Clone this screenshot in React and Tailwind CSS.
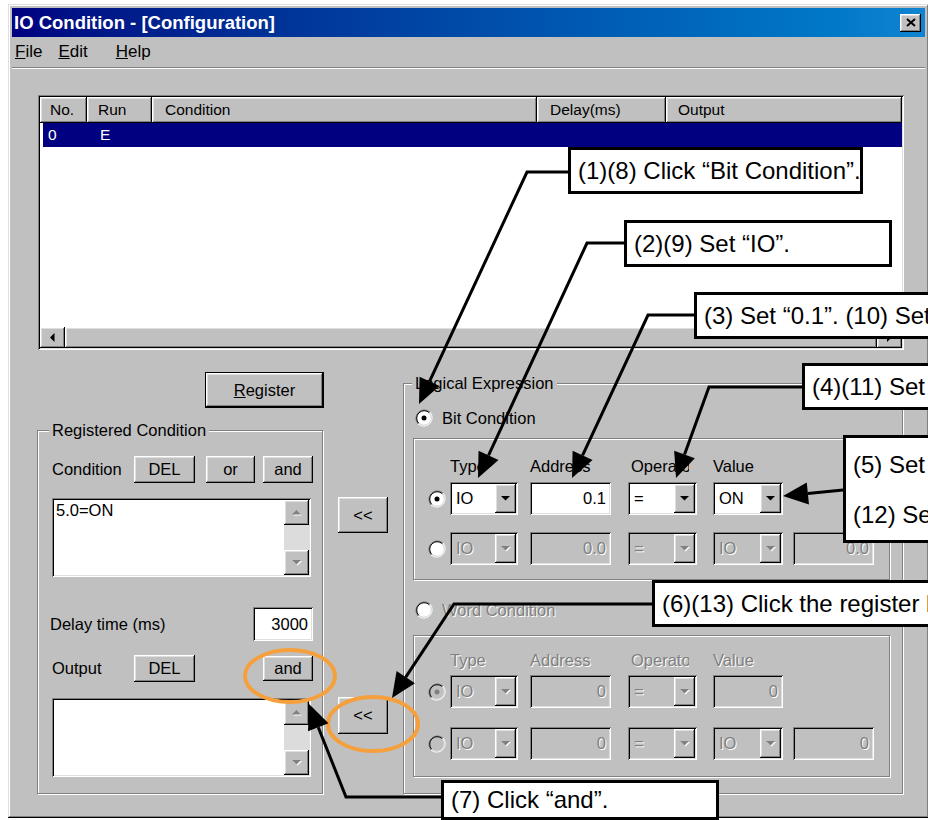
import React from "react";

const raised =
  "bg-[#c0c0c0] shadow-[inset_-1px_-1px_#000,inset_1px_1px_#fff,inset_-2px_-2px_#808080,inset_2px_2px_#dfdfdf]";
const sunken =
  "shadow-[inset_1px_1px_#808080,inset_-1px_-1px_#fff,inset_2px_2px_#000,inset_-2px_-2px_#dfdfdf]";
const etched = "border border-[#808080] shadow-[1px_1px_0_#fff,inset_1px_1px_0_#fff]";
const dim = "text-[#808080] [text-shadow:1px_1px_0_#fff]";

function Tri({ dir = "down", off }) {
  const pts = {
    down: "0,0 9,0 4.5,4.5",
    up: "0,4.5 9,4.5 4.5,0",
    left: "4.5,0 4.5,9 0,4.5",
    right: "0,0 0,9 4.5,4.5",
  }[dir];
  const flat = dir === "down" || dir === "up";
  return (
    <svg width={flat ? 10 : 6} height={flat ? 6 : 10} className="shrink-0">
      {off && <polygon points={pts} fill="#fff" transform="translate(1 1)" />}
      <polygon points={pts} fill={off ? "#808080" : "#000"} />
    </svg>
  );
}

function Radio({ checked, off }) {
  return (
    <svg width="18" height="18" viewBox="0 0 18 18" className="shrink-0">
      <circle cx="9" cy="9" r="7" fill={off ? "#c0c0c0" : "#fff"} />
      <path d="M3 15A8.5 8.5 0 0 1 15 3" fill="none" stroke="#808080" />
      <path d="M15 3A8.5 8.5 0 0 1 3 15" fill="none" stroke="#fff" />
      <path d="M3.7 14.3A7.5 7.5 0 0 1 14.3 3.7" fill="none" stroke="#000" />
      <path d="M14.3 3.7A7.5 7.5 0 0 1 3.7 14.3" fill="none" stroke="#dfdfdf" />
      {checked && <circle cx="9" cy="9" r="2.5" fill={off ? "#808080" : "#000"} />}
    </svg>
  );
}

function Combo({ v, off, className = "" }) {
  return (
    <div className={`flex p-[2px] ${sunken} ${off ? "bg-[#c0c0c0]" : "bg-white"} ${className}`}>
      <div className={`flex-1 flex items-center pl-[4px] ${off ? dim : ""}`}>{v}</div>
      <div className={`w-[21px] flex items-center justify-center ${raised}`}>
        <Tri off={off} />
      </div>
    </div>
  );
}

function Field({ v, off, className = "" }) {
  return (
    <div
      className={`flex items-center justify-end pr-[5px] ${sunken} ${
        off ? "bg-[#c0c0c0] text-[#808080] [text-shadow:1px_1px_0_#fff]" : "bg-white"
      } ${className}`}
    >
      {v}
    </div>
  );
}

function Btn({ className = "", children }) {
  return <div className={`flex items-center justify-center ${raised} ${className}`}>{children}</div>;
}

function ListBox({ text }) {
  return (
    <div className={`flex w-[259px] h-[79px] bg-white p-[2px] ${sunken}`}>
      <div className="flex-1 pl-[2px] leading-[20px]">{text}</div>
      <div className="w-[25px] flex flex-col">
        <Btn className="h-[25px]">
          <Tri dir="up" off />
        </Btn>
        <div className="flex-1 bg-[#dcdcdc]" />
        <Btn className="h-[25px]">
          <Tri dir="down" off />
        </Btn>
      </div>
    </div>
  );
}

function Labels({ off, className = "" }) {
  return (
    <div className={`flex h-[20px] items-center ${off ? dim : ""} ${className}`}>
      <div className="w-[22px]" />
      <div className="w-[68px]">Type</div>
      <div className="ml-[12px] w-[81px]">Address</div>
      <div className="ml-[17px] w-[69px]">
        <div className="ml-[3px] w-[58px] overflow-hidden whitespace-nowrap">Operator</div>
      </div>
      <div className="ml-[16px] w-[70px]">Value</div>
    </div>
  );
}

const leads = [
  { pts: [[568, 172], [527, 172]], tip: [419, 404] },
  { pts: [[624, 243], [587, 243]], tip: [478, 478] },
  { pts: [[694, 315], [648, 315]], tip: [572, 478] },
  { pts: [[802, 387], [709, 387]], tip: [676, 478] },
  { pts: [[843, 490]], tip: [783, 496] },
  { pts: [[652, 604], [454, 604]], tip: [392, 698] },
  { pts: [[441, 797], [346, 797]], tip: [309, 704] },
];

function Leader({ pts, tip }) {
  const [fx, fy] = pts[pts.length - 1];
  const dx = tip[0] - fx;
  const dy = tip[1] - fy;
  const len = Math.hypot(dx, dy);
  const ux = dx / len;
  const uy = dy / len;
  const bx = tip[0] - ux * 25;
  const by = tip[1] - uy * 25;
  const nx = -uy * 11;
  const ny = ux * 11;
  const d = "M" + pts.map((p) => p.join(" ")).join(" L") + ` L${bx} ${by}`;
  return (
    <g>
      <path d={d} fill="none" stroke="#000" strokeWidth="3" />
      <polygon points={`${tip[0]},${tip[1]} ${bx + nx},${by + ny} ${bx - nx},${by - ny}`} fill="#000" />
    </g>
  );
}

function Callout({ className = "", children }) {
  return (
    <div
      className={`absolute bg-white border-[3px] border-black pl-[7px] text-[24px] whitespace-nowrap font-['Liberation_Sans',Arial,sans-serif] ${className}`}
    >
      {children}
    </div>
  );
}

export default function App() {
  return (
    <div className="relative w-[928px] h-[820px] overflow-hidden bg-white pl-[8px] pt-[4px] font-['Liberation_Sans',Arial,sans-serif] text-[16.5px] text-black">
      <div className="w-[921px] h-[814px] bg-[#c0c0c0] p-[4px] flex flex-col shadow-[inset_-1px_-1px_#000,inset_1px_1px_#dfdfdf,inset_-2px_-2px_#808080,inset_2px_2px_#fff]">
        {/* title bar */}
        <div className="h-[29px] flex items-center bg-linear-to-r from-[#000080] to-[#1084d0] pl-[2px] pr-[4px]">
          <span className="text-white font-bold text-[18.5px]">IO Condition - [Configuration]</span>
          <Btn className="ml-auto w-[21px] h-[18px]">
            <svg width="10" height="9">
              <path d="M1 1L9 8M9 1L1 8" stroke="#000" strokeWidth="2" />
            </svg>
          </Btn>
        </div>

        {/* menu */}
        <div className="h-[29px] flex items-center text-[17px]">
          <span className="ml-[3px]">
            <u>F</u>ile
          </span>
          <span className="ml-[16px]">
            <u>E</u>dit
          </span>
          <span className="ml-[28px]">
            <u>H</u>elp
          </span>
        </div>
        <div className="mt-[1px] h-[1px] bg-[#808080]" />
        <div className="h-[1px] bg-white" />

        {/* client */}
        <div className="pl-[25px] pt-[26px]">
          {/* list view */}
          <div className={`ml-[1px] w-[866px] h-[255px] bg-white p-[2px] flex flex-col ${sunken}`}>
            <div className="flex h-[26px] text-[15.5px]">
              <div className={`w-[47px] flex items-center pl-[10px] ${raised}`}>No.</div>
              <div className={`w-[65px] flex items-center pl-[11px] ${raised}`}>Run</div>
              <div className={`w-[385px] flex items-center pl-[13px] ${raised}`}>Condition</div>
              <div className={`w-[129px] flex items-center pl-[13px] ${raised}`}>Delay(ms)</div>
              <div className={`flex-1 flex items-center pl-[12px] ${raised}`}>Output</div>
            </div>
            <div className="h-[24px] ml-[3px] bg-[#000080] text-white flex items-center text-[15.5px]">
              <div className="w-[44px] pl-[5px]">0</div>
              <div className="pl-[13px]">E</div>
            </div>
            <div className="flex-1" />
            <div className="h-[21px] flex">
              <Btn className="w-[25px]">
                <Tri dir="left" />
              </Btn>
              <div className={`flex-1 ${raised}`} />
              <Btn className="w-[25px]">
                <Tri dir="right" />
              </Btn>
            </div>
          </div>

          <div className="flex">
            {/* left column */}
            <div className="w-[287px] flex flex-col">
              <div className="self-end mt-[22px] w-[119px] h-[36px] border border-black">
                <Btn className="w-full h-full">
                  <span>
                    <u>R</u>egister
                  </span>
                </Btn>
              </div>
              <fieldset className={`mt-[12px] w-[286px] ${etched}`}>
                <legend className="ml-[11px] px-[3px] leading-[20px] bg-[#c0c0c0]">Registered Condition</legend>
                <div className="pl-[14px] pt-[16px] pb-[16px]">
                  <div className="flex items-center h-[27px] w-[261px]">
                    <div className="w-[82px]">Condition</div>
                    <Btn className="w-[61px] h-full">DEL</Btn>
                    <Btn className="ml-[11px] w-[49px] h-full">or</Btn>
                    <Btn className="ml-[8px] w-[50px] h-full">and</Btn>
                  </div>
                  <div className="mt-[15px]">
                    <ListBox text="5.0=ON" />
                  </div>
                  <div className="mt-[30px] flex items-center h-[34px] w-[261px]">
                    <div className="-ml-[2px]">Delay time (ms)</div>
                    <Field v="3000" className="ml-auto w-[60px] h-full" />
                  </div>
                  <div className="mt-[14px] flex items-center h-[27px] w-[261px]">
                    <div className="w-[82px]">Output</div>
                    <Btn className="w-[61px] h-full">DEL</Btn>
                    <Btn className="ml-auto w-[50px] h-[25px]">and</Btn>
                  </div>
                  <div className="mt-[16px]">
                    <ListBox text="" />
                  </div>
                </div>
              </fieldset>
            </div>

            {/* middle column */}
            <div className="ml-[14px] w-[50px] flex flex-col">
              <Btn className="mt-[147px] h-[36px]">&lt;&lt;</Btn>
              <Btn className="mt-[164px] h-[37px]">&lt;&lt;</Btn>
            </div>

            {/* logical expression */}
            <fieldset className={`ml-[15px] mt-[23px] w-[500px] self-start ${etched}`}>
              <legend className="ml-[8px] px-[3px] leading-[20px] bg-[#c0c0c0]">Logical Expression</legend>
              <div className="pl-[9px] pt-[16px] pb-[16px]">
                <div className="ml-[2px] flex items-center h-[18px]">
                  <Radio checked />
                  <span className="ml-[9px]">Bit Condition</span>
                </div>
                <div className={`mt-[11px] w-[477px] h-[142px] pl-[14px] pt-[17px] ${etched}`}>
                  <Labels />
                  <div className="mt-[6px] flex h-[33px]">
                    <div className="w-[22px] flex items-center">
                      <Radio checked />
                    </div>
                    <Combo v="IO" className="w-[68px]" />
                    <Field v="0.1" className="ml-[12px] w-[81px]" />
                    <Combo v="=" className="ml-[17px] w-[69px]" />
                    <Combo v="ON" className="ml-[16px] w-[70px]" />
                  </div>
                  <div className="mt-[17px] flex h-[33px]">
                    <div className="w-[22px] flex items-center">
                      <Radio />
                    </div>
                    <Combo v="IO" off className="w-[68px]" />
                    <Field v="0.0" off className="ml-[12px] w-[81px]" />
                    <Combo v="=" off className="ml-[17px] w-[69px]" />
                    <Combo v="IO" off className="ml-[16px] w-[70px]" />
                    <Field v="0.0" off className="ml-[10px] w-[81px]" />
                  </div>
                </div>

                <div className="mt-[21px] ml-[2px] flex items-center h-[18px]">
                  <Radio />
                  <span className={`ml-[9px] ${dim}`}>Word Condition</span>
                </div>
                <div className={`mt-[16px] w-[477px] h-[142px] pl-[14px] pt-[14px] ${etched}`}>
                  <Labels off />
                  <div className="mt-[5px] flex h-[33px]">
                    <div className="w-[22px] flex items-center">
                      <Radio checked off />
                    </div>
                    <Combo v="IO" off className="w-[68px]" />
                    <Field v="0" off className="ml-[12px] w-[81px]" />
                    <Combo v="=" off className="ml-[17px] w-[69px]" />
                    <Field v="0" off className="ml-[16px] w-[70px]" />
                  </div>
                  <div className="mt-[19px] flex h-[33px]">
                    <div className="w-[22px] flex items-center">
                      <Radio off />
                    </div>
                    <Combo v="IO" off className="w-[68px]" />
                    <Field v="0" off className="ml-[12px] w-[81px]" />
                    <Combo v="=" off className="ml-[17px] w-[69px]" />
                    <Combo v="IO" off className="ml-[16px] w-[70px]" />
                    <Field v="0" off className="ml-[10px] w-[81px]" />
                  </div>
                </div>
              </div>
            </fieldset>
          </div>
        </div>
      </div>

      {/* annotation overlay */}
      <svg className="absolute left-0 top-0 pointer-events-none" width="928" height="820">
        <ellipse cx="290" cy="676" rx="45" ry="26" fill="none" stroke="#f5a03c" strokeWidth="4" />
        <ellipse cx="373" cy="724" rx="45" ry="27" fill="none" stroke="#f5a03c" strokeWidth="4" />
        {leads.map((l, i) => (
          <Leader key={i} pts={l.pts} tip={l.tip} />
        ))}
      </svg>

      <Callout className="left-[568px] top-[147px] w-[295px] h-[47px] flex items-center">
        (1)(8) Click “Bit Condition”.
      </Callout>
      <Callout className="left-[624px] top-[220px] w-[268px] h-[47px] flex items-center">(2)(9) Set “IO”.</Callout>
      <Callout className="left-[694px] top-[292px] w-[300px] h-[47px] flex items-center">
        (3) Set “0.1”. (10) Set
      </Callout>
      <Callout className="left-[802px] top-[363px] w-[200px] h-[47px] flex items-center">(4)(11) Set</Callout>
      <Callout className="left-[843px] top-[435px] w-[150px] h-[108px] pt-[13px]">
        <div className="leading-[28px]">(5) Set</div>
        <div className="mt-[22px] leading-[28px]">(12) Set</div>
      </Callout>
      <Callout className="left-[652px] top-[580px] w-[350px] h-[47px] flex items-center">
        (6)(13) Click the register button.
      </Callout>
      <Callout className="left-[441px] top-[780px] w-[278px] h-[40px] flex items-center">(7) Click “and”.</Callout>
    </div>
  );
}
